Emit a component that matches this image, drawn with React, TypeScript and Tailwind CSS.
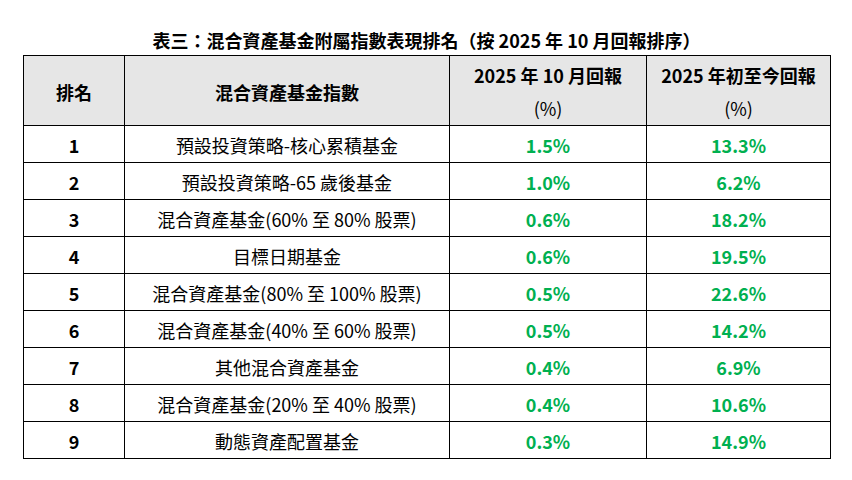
import * as React from "react";

interface FundRow {
  rank: number;
  name: string;
  oct: string;
  ytd: string;
}

const rows: FundRow[] = [
  { rank: 1, name: "預設投資策略-核心累積基金", oct: "1.5%", ytd: "13.3%" },
  { rank: 2, name: "預設投資策略-65 歲後基金", oct: "1.0%", ytd: "6.2%" },
  { rank: 3, name: "混合資產基金(60% 至 80% 股票)", oct: "0.6%", ytd: "18.2%" },
  { rank: 4, name: "目標日期基金", oct: "0.6%", ytd: "19.5%" },
  { rank: 5, name: "混合資產基金(80% 至 100% 股票)", oct: "0.5%", ytd: "22.6%" },
  { rank: 6, name: "混合資產基金(40% 至 60% 股票)", oct: "0.5%", ytd: "14.2%" },
  { rank: 7, name: "其他混合資產基金", oct: "0.4%", ytd: "6.9%" },
  { rank: 8, name: "混合資產基金(20% 至 40% 股票)", oct: "0.4%", ytd: "10.6%" },
  { rank: 9, name: "動態資產配置基金", oct: "0.3%", ytd: "14.9%" },
];

const font = "[font-family:'Noto_Sans_CJK_TC','Noto_Sans',sans-serif]";

export default function App() {
  return (
    <div className={`w-[852px] h-[480px] bg-white text-black ${font}`}>
      <div className="ml-[23px] w-[807px] pt-[27px]">
        <h1 className="text-center text-[18px] font-bold leading-[26px] mb-[2px]">
          表三：混合資產基金附屬指數表現排名（按 2025 年 10 月回報排序）
        </h1>
        <table className="w-[807px] table-fixed border-collapse">
          <colgroup>
            <col className="w-[101px]" />
            <col className="w-[325px]" />
            <col className="w-[197px]" />
            <col className="w-[184px]" />
          </colgroup>
          <thead>
            <tr className="h-[70px] bg-[#e6e6e6]">
              <th className="border border-black text-[18px] font-bold pt-[3px]">排名</th>
              <th className="border border-black text-[18px] font-bold pt-[3px]">混合資產基金指數</th>
              <th className="border border-black text-[18px] font-bold leading-[33px] pt-[3px]">
                2025 年 10 月回報
                <br />
                <span className="font-normal">(%)</span>
              </th>
              <th className="border border-black text-[18px] font-bold leading-[33px] pt-[3px]">
                2025 年初至今回報
                <br />
                <span className="font-normal">(%)</span>
              </th>
            </tr>
          </thead>
          <tbody>
            {rows.map((r) => (
              <tr key={r.rank} className="h-[37px] text-[18px] text-center">
                <td className="border border-black font-bold pt-[3px]">{r.rank}</td>
                <td className="border border-black pt-[3px]">{r.name}</td>
                <td className="border border-black font-bold text-[#00b050] pt-[3px]">{r.oct}</td>
                <td className="border border-black font-bold text-[#00b050] pt-[3px]">{r.ytd}</td>
              </tr>
            ))}
          </tbody>
        </table>
      </div>
    </div>
  );
}
